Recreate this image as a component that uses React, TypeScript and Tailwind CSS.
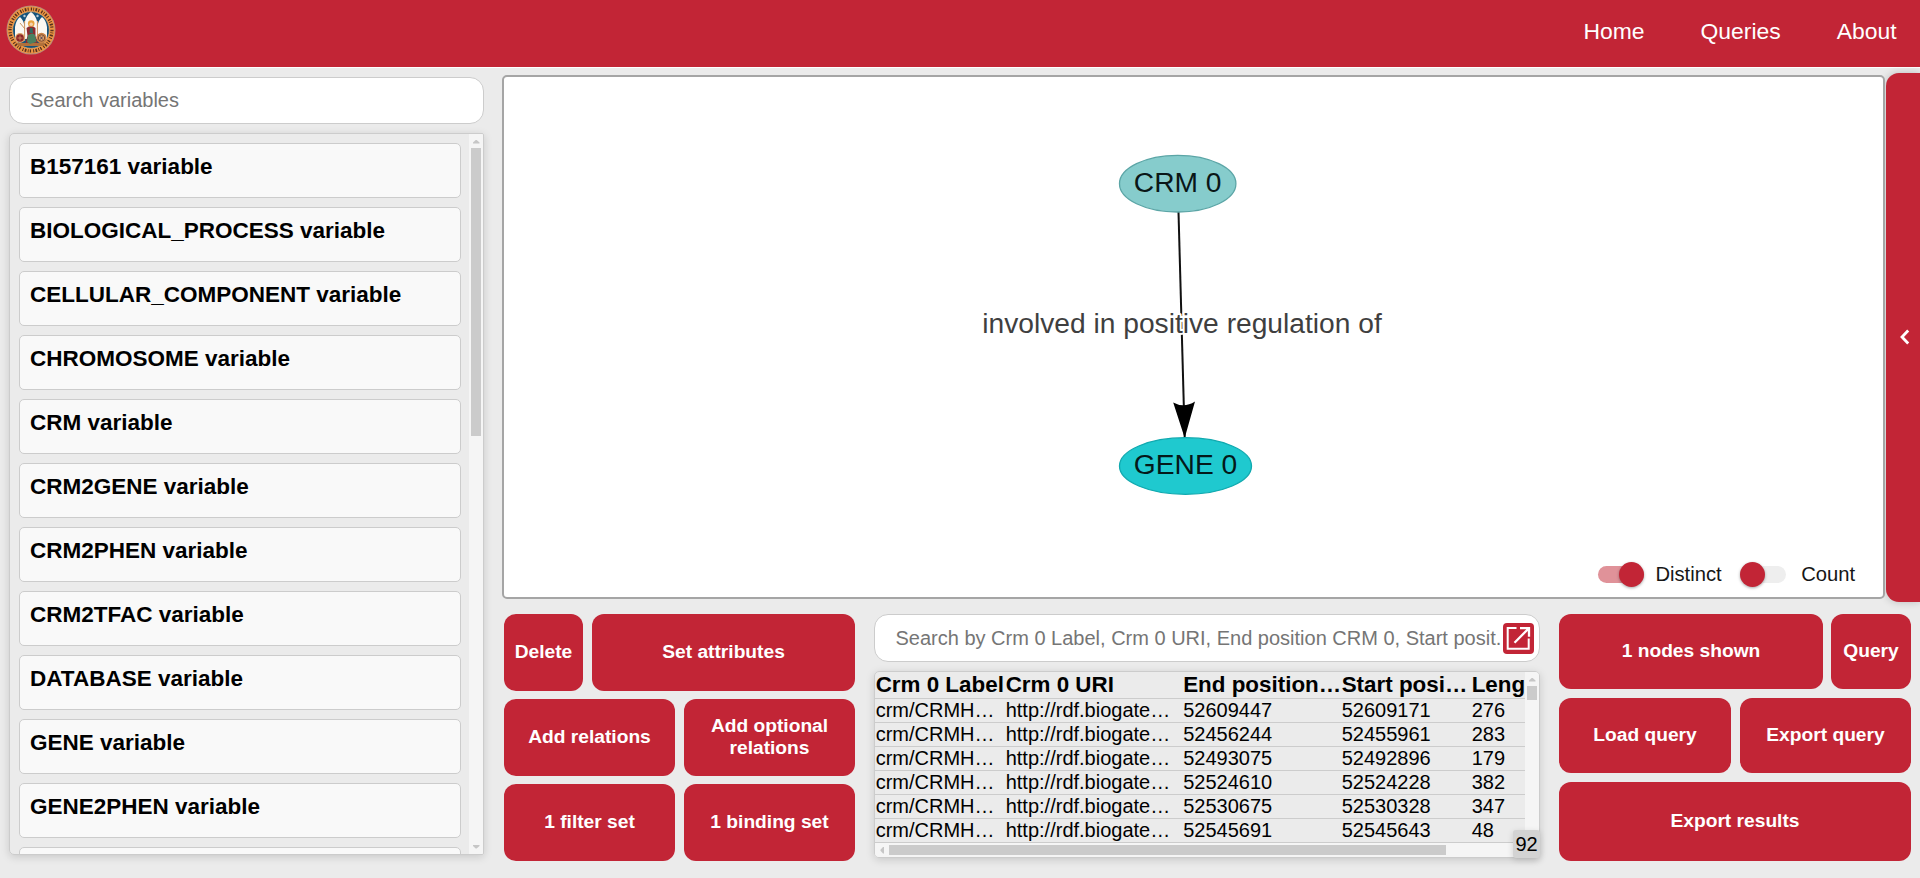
import type { ReactNode } from "react";

const variables = [
  "B157161 variable",
  "BIOLOGICAL_PROCESS variable",
  "CELLULAR_COMPONENT variable",
  "CHROMOSOME variable",
  "CRM variable",
  "CRM2GENE variable",
  "CRM2PHEN variable",
  "CRM2TFAC variable",
  "DATABASE variable",
  "GENE variable",
  "GENE2PHEN variable",
  "",
];

const rows = [
  ["52609447", "52609171", "276"],
  ["52456244", "52455961", "283"],
  ["52493075", "52492896", "179"],
  ["52524610", "52524228", "382"],
  ["52530675", "52530328", "347"],
  ["52545691", "52545643", "48"],
];

function Logo() {
  return (
    <svg width="50" height="50" viewBox="0 0 50 50" aria-hidden="true">
      <circle cx="25" cy="25" r="24.5" fill="#b98d78" />
      <circle cx="25" cy="25" r="23.6" fill="#ee9440" />
      <circle cx="25" cy="25" r="21" fill="none" stroke="#54301f" strokeWidth="3.2" strokeDasharray="1.3 1.3 0.8 1.4 1.6 1.3 1 2.2" />
      <circle cx="25" cy="25" r="18.4" fill="#15547c" stroke="#e5a868" strokeWidth="0.8" />
      <path d="M9 34V22q1-7 5-10 3.500 3 4.500 9v13zM18.800 34V17q1.500-7 6.200-10 4.700 3 6.200 10v17zM31.500 34V21q1-6 4.500-9 4 3 5 10v12z" fill="#fbf8f2" />
      <path d="M18.600 16v20M31.400 16v20" stroke="#d59a62" strokeWidth="1" />
      <circle cx="18.500" cy="11" r="1.200" fill="#b9cbd5" />
      <circle cx="31.500" cy="11" r="1.200" fill="#b9cbd5" />
      <path d="M10.500 38h29l-2 3h-25z" fill="#b0703a" />
      <circle cx="14" cy="33" r="5" fill="#d9a36a" />
      <circle cx="14" cy="33" r="3.800" fill="#8e2428" />
      <path d="M11.500 33h5M14 30.500v5" stroke="#d9a36a" strokeWidth="0.700" />
      <circle cx="35.500" cy="33" r="5.200" fill="#c98245" />
      <circle cx="35.500" cy="33" r="3.200" fill="#dfa268" stroke="#7b4a36" strokeWidth="1" />
      <path d="M34.300 31.500l2.400 3m0-3l-2.400 3" stroke="#3d3c60" strokeWidth="0.900" />
      <path d="M20.500 23q4.500-4 9 0l0 8 2 7h-12l2-7z" fill="#8d2a2f" />
      <path d="M22 30q5-3 7 0l1.500 7-6.500 2-3-2z" fill="#4b8160" />
      <path d="M24 23h2.500l0.500 5h-3.500z" fill="#2f6b63" />
      <circle cx="25.200" cy="18.500" r="3.300" fill="#e9a33f" />
      <circle cx="25.200" cy="19.200" r="1.700" fill="#f3d2ad" />
      <path d="M14 18l5 6" stroke="#c48a55" strokeWidth="0.900" />
    </svg>
  );
}

function Arrow({ className, d }: { className: string; d: string }) {
  return (
    <svg className={className} viewBox="0 0 14 14" width="14" height="14" aria-hidden="true">
      <path d={d} fill="#c6c6c6" />
    </svg>
  );
}

const UP = "M4 9.500h6.500v-1L7.700 6h-1L4 8.500z";
const DOWN = "M4 5h6.500v1L7.700 8.500h-1L4 6z";
const LEFT = "M9 4v6.500H8L5.500 7.700v-1L8 4z";

function ActionButton({ className, children }: { className: string; children: ReactNode }) {
  return (
    <button
      className={`flex items-center justify-center rounded-[12px] bg-[#c22536] pb-[2px] text-center text-[19.2px] leading-[22px] font-bold text-white ${className}`}
    >
      {children}
    </button>
  );
}

function Graph() {
  return (
    <svg className="block" width="1379" height="520" viewBox="504 77 1379 520" fontFamily="'Liberation Sans', Arial, sans-serif">
      <line x1="1178.500" y1="212" x2="1184.700" y2="438" stroke="#111" strokeWidth="2" />
      <path d="M1184.700 438L1173.200 402.500Q1184 408.500 1195 401.500z" fill="#000" />
      <ellipse cx="1177.700" cy="183.700" rx="58.200" ry="28.300" fill="#86cccc" stroke="#5ba5a6" strokeWidth="1.300" />
      <ellipse cx="1185.500" cy="466" rx="66" ry="28.300" fill="#1fc9cf" stroke="#10a9af" strokeWidth="1.300" />
      <text x="1177.700" y="191.700" textAnchor="middle" fontSize="28.200" fill="#0a1717">CRM 0</text>
      <text x="1185.500" y="473.700" textAnchor="middle" fontSize="28.200" fill="#04191a">GENE 0</text>
      <text x="1182" y="332.700" textAnchor="middle" fontSize="28.200" fill="#3f3f3f" stroke="#fff" strokeWidth="4" strokeLinejoin="round" paintOrder="stroke">
        involved in positive regulation of
      </text>
    </svg>
  );
}

export default function App() {
  return (
    <div className="flex h-[878px] w-full flex-col overflow-hidden bg-[#ebebeb] font-['Liberation_Sans',Arial,sans-serif] text-black">
      <header className="flex h-[68px] shrink-0 items-start justify-between border-b border-white bg-[#c22536] pt-[4.500px] pr-[23.500px] pl-[6px]">
        <Logo />
        <nav className="flex gap-[56px] pt-[13.500px] text-[22.900px] leading-[26px] text-white">
          <a>Home</a>
          <a>Queries</a>
          <a>About</a>
        </nav>
      </header>

      <div className="flex min-h-0 flex-1">
        <aside className="ml-[9px] flex w-[475px] shrink-0 flex-col pt-[9px]">
          <input
            className="h-[47px] w-full shrink-0 rounded-[14px] border border-[#ccc] bg-white pb-px pl-[20px] text-[20px] placeholder:text-[#757575]"
            placeholder="Search variables"
          />
          <div className="mt-[9px] flex h-[722px] shrink-0 overflow-hidden rounded-[5px] rounded-r-[2px] border border-[#ccc] shadow-[0_2px_8px_rgba(0,0,0,0.15)]">
            <ul className="flex flex-1 flex-col gap-[9px] pt-[9px] pr-[8px] pl-[9px]">
              {variables.map((name) => (
                <li key={name} className="h-[55px] shrink-0 rounded-[5px] border border-[#ccc] bg-[#f9f9f9] px-[10px] pt-[10px] text-[22.500px] leading-[26px] font-bold">
                  {name}
                </li>
              ))}
            </ul>
            <div className="flex w-[14px] shrink-0 flex-col items-center bg-[#f5f5f5]">
              <Arrow className="shrink-0" d={UP} />
              <div className="h-[288px] w-[10px] shrink-0 bg-[#cbcbcb]" />
              <Arrow className="mt-auto shrink-0" d={DOWN} />
            </div>
          </div>
        </aside>

        <main className="ml-[18px] flex min-w-0 flex-1 flex-col">
          <div className="flex h-[534px] shrink-0 gap-[1px] pt-[5px]">
            <section className="relative mt-[2px] h-[524px] w-[1383px] shrink-0 overflow-hidden rounded-[5px] border-2 border-[#a5a5a5] bg-white">
              <Graph />
              <div className="absolute right-[28px] bottom-[10px] flex h-[25px] items-center text-[20.200px] leading-[25px] text-[#161616]">
                <div className="flex h-[17px] w-[46px] items-center justify-end rounded-full bg-[#e09299]">
                  <span className="h-[25px] w-[25px] shrink-0 rounded-full bg-[#c22536] shadow-[0_1px_3px_rgba(0,0,0,0.35)]" />
                </div>
                <span className="ml-[11px]">Distinct</span>
                <div className="ml-[18px] flex h-[17px] w-[46px] items-center rounded-full bg-[#eee]">
                  <span className="h-[25px] w-[25px] shrink-0 rounded-full bg-[#c22536] shadow-[0_1px_3px_rgba(0,0,0,0.35)]" />
                </div>
                <span className="ml-[15.500px]">Count</span>
              </div>
            </section>
            <button className="flex h-[529px] flex-1 items-center rounded-l-[13px] bg-[#c22536] pb-px pl-[14px] shadow-[0_0_8px_rgba(0,0,0,0.2)]">
              <svg width="10" height="16" viewBox="0 0 10 16" aria-hidden="true">
                <path d="M8.200 1.500L2 8l6.200 6.500" fill="none" stroke="#fff" strokeWidth="2.800" />
              </svg>
            </button>
          </div>

          <div className="flex pt-[12px] pl-[2px]">
            <section className="flex w-[351px] shrink-0 flex-col gap-[8px]">
              <div className="flex h-[77px] gap-[9px]">
                <ActionButton className="w-[79px]">Delete</ActionButton>
                <ActionButton className="flex-1">Set attributes</ActionButton>
              </div>
              <div className="flex h-[77px] gap-[9px]">
                <ActionButton className="w-[171px]">Add relations</ActionButton>
                <ActionButton className="w-[171px] px-[10px]">Add optional relations</ActionButton>
              </div>
              <div className="flex h-[77px] gap-[9px]">
                <ActionButton className="w-[171px]">1 filter set</ActionButton>
                <ActionButton className="w-[171px]">1 binding set</ActionButton>
              </div>
            </section>

            <section className="ml-[19px] flex w-[666px] shrink-0 flex-col">
              <div className="flex h-[48px] items-center rounded-[14px] border border-[#ccc] bg-white pr-[5px] pl-[20.500px]">
                <input
                  className="min-w-0 flex-1 text-[20px] placeholder:text-[#757575]"
                  placeholder="Search by Crm 0 Label, Crm 0 URI, End position CRM 0, Start posit."
                />
                <button className="h-[31px] w-[31px] shrink-0 rounded-[4px] bg-[#c22536]">
                  <svg width="31" height="31" viewBox="0 0 31 31" fill="none" stroke="#fff" strokeWidth="2" aria-hidden="true">
                    <path d="M13.500 5H4.700v20.800h21V15.500" />
                    <path d="M17 5.200h9v8.500M25.700 5.500L11.500 19.700" strokeWidth="2.300" />
                  </svg>
                </button>
              </div>

              <div className="relative mt-[9px] flex h-[187px] flex-col rounded-[5px] border border-[#ccc] shadow-[0_2px_8px_rgba(0,0,0,0.15)]">
                <div className="flex min-h-0 flex-1">
                  <div className="w-[650px] shrink-0 overflow-hidden">
                    <div className="flex h-[27px] w-[800px] border-b border-[#ccc] pl-[0.700px] text-[22.400px] leading-[25px] font-bold whitespace-nowrap">
                      <span className="w-[130px] shrink-0">Crm 0 Label</span>
                      <span className="w-[177.500px] shrink-0">Crm 0 URI</span>
                      <span className="w-[158.500px] shrink-0">End position…</span>
                      <span className="w-[130px] shrink-0">Start posi…</span>
                      <span>Leng</span>
                    </div>
                    {rows.map(([end, start, length]) => (
                      <div key={end} className="flex h-[24px] w-[800px] border-b border-[#ccc] pl-[0.700px] text-[20px] leading-[23px] whitespace-nowrap">
                        <span className="w-[130px] shrink-0">crm/CRMH…</span>
                        <span className="w-[177.500px] shrink-0">http://rdf.biogate…</span>
                        <span className="w-[158.500px] shrink-0">{end}</span>
                        <span className="w-[130px] shrink-0">{start}</span>
                        <span>{length}</span>
                      </div>
                    ))}
                  </div>
                  <div className="flex flex-1 flex-col items-center rounded-tr-[4px] bg-[#f5f5f5]">
                    <Arrow className="shrink-0" d={UP} />
                    <div className="h-[14px] w-[10px] bg-[#cbcbcb]" />
                  </div>
                </div>
                <div className="flex h-[14px] shrink-0 items-center rounded-b-[4px] bg-[#f5f5f5]">
                  <Arrow className="shrink-0" d={LEFT} />
                  <div className="h-[10px] w-[557px] bg-[#cbcbcb]" />
                </div>
                <span className="absolute -right-px -bottom-px flex h-[28px] w-[27px] items-center justify-center rounded-[3px] bg-[#d3d3d3] pb-px text-[20px] shadow-[0_2px_6px_rgba(0,0,0,0.15)]">
                  92
                </span>
              </div>
            </section>

            <section className="ml-[19px] flex w-[352px] shrink-0 flex-col gap-[9px]">
              <div className="flex h-[75px] gap-[8px]">
                <ActionButton className="w-[264px]">1 nodes shown</ActionButton>
                <ActionButton className="w-[80px]">Query</ActionButton>
              </div>
              <div className="flex h-[75px] gap-[9px]">
                <ActionButton className="w-[172px]">Load query</ActionButton>
                <ActionButton className="w-[171px]">Export query</ActionButton>
              </div>
              <ActionButton className="h-[79px]">Export results</ActionButton>
            </section>
          </div>
        </main>
      </div>
    </div>
  );
}
